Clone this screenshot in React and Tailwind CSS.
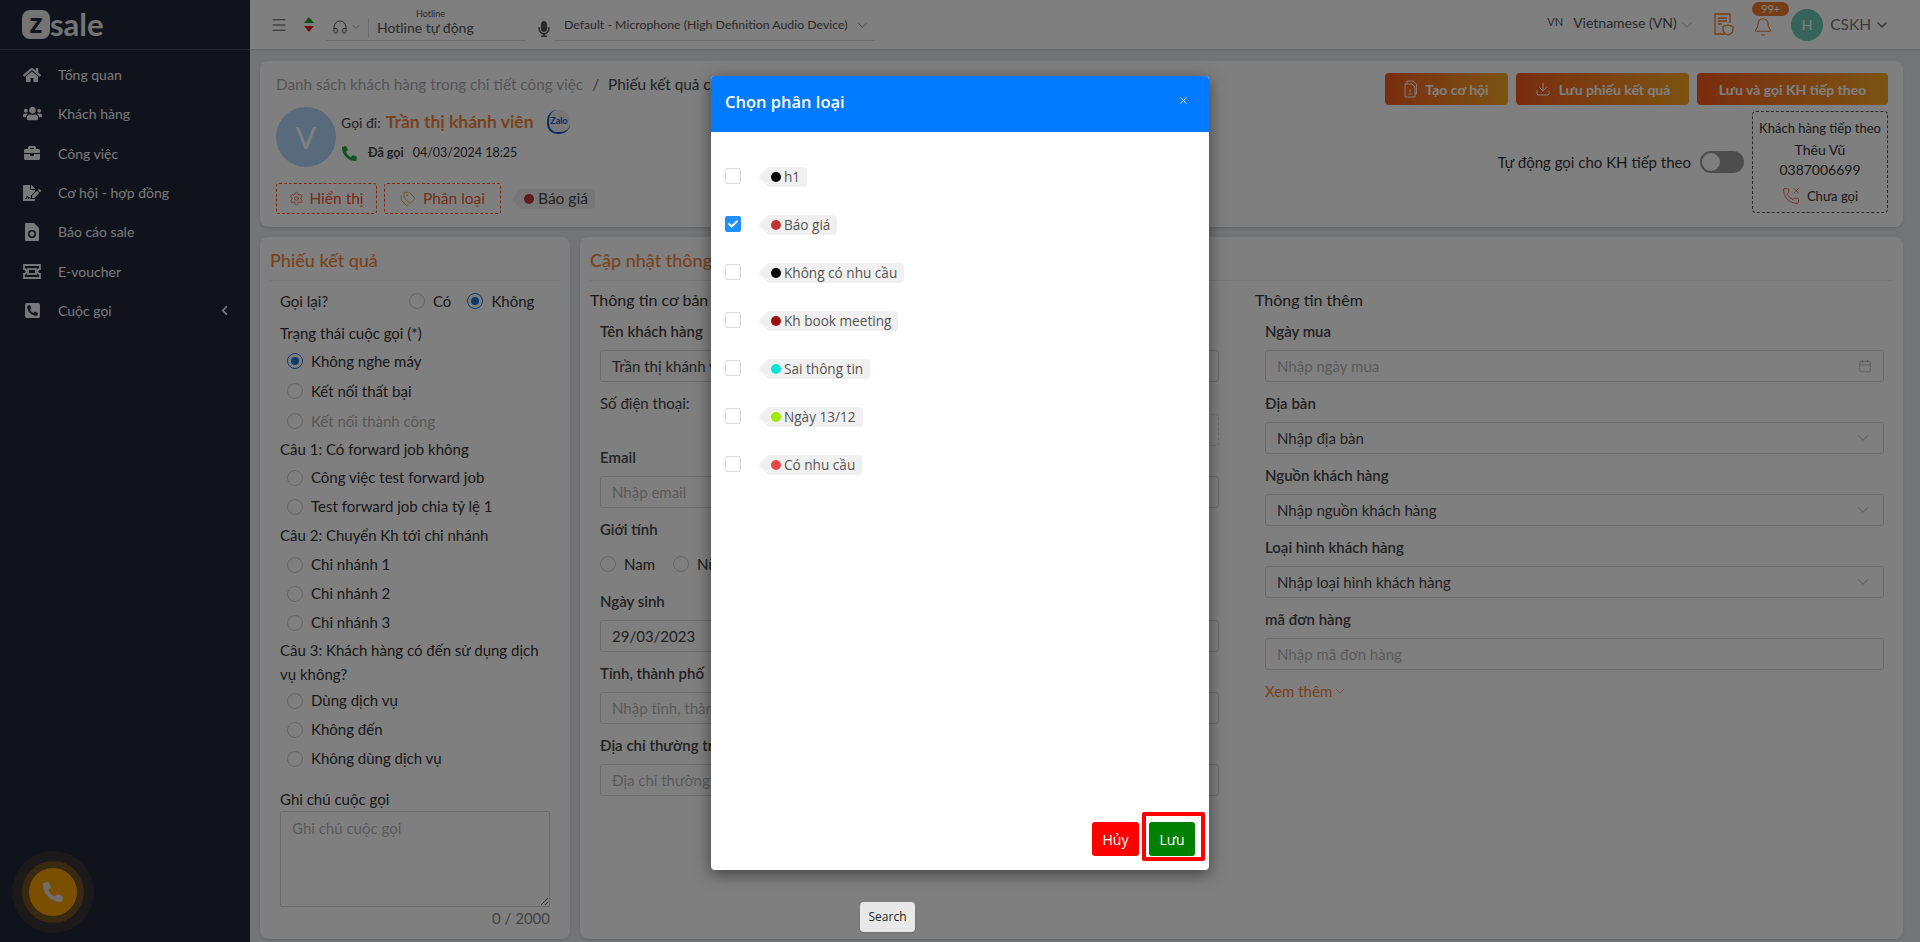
import { FaHome, FaUsers, FaBriefcase, FaFileSignature, FaPhoneSquareAlt, FaChevronLeft, FaMicrophone, FaPhoneAlt, FaCheck } from "react-icons/fa";
import { Bell, Calendar, ChevronDown, Download, Headphones, Menu, PhoneMissed, Settings, Tags, X } from "lucide-react";

const main = { fontFamily: "Lato, 'Noto Sans', sans-serif" };
const modalFont = { fontFamily: "'Open Sans', 'Noto Sans', sans-serif" };

const navItems = [
  { label: "Tổng quan", icon: <FaHome size={18} /> },
  { label: "Khách hàng", icon: <FaUsers size={19} /> },
  { label: "Công việc", icon: <FaBriefcase size={16} /> },
  { label: "Cơ hội - hợp đồng", icon: <FaFileSignature size={18} /> },
  {
    label: "Báo cáo sale",
    icon: (
      <svg width="14" height="18" viewBox="0 0 14 18">
        <path d="M1 0h8l5 5v12a1 1 0 0 1-1 1H1a1 1 0 0 1-1-1V1a1 1 0 0 1 1-1z" fill="currentColor" />
        <circle cx="7" cy="11" r="3.2" fill="none" stroke="#222638" strokeWidth="1.6" />
      </svg>
    ),
  },
  {
    label: "E-voucher",
    icon: (
      <svg width="18" height="15" viewBox="0 0 18 15" fill="none" stroke="currentColor" strokeWidth="1.8">
        <path d="M1 1h16v4a2.5 2.5 0 0 0 0 5v4H1v-4a2.5 2.5 0 0 0 0-5z" />
        <rect x="5" y="5" width="8" height="5" />
      </svg>
    ),
  },
  { label: "Cuộc gọi", icon: <FaPhoneSquareAlt size={17} />, arrow: true },
];

const tags = [
  { label: "h1", color: "bg-black" },
  { label: "Báo giá", color: "bg-[#c23535]", checked: true },
  { label: "Không có nhu cầu", color: "bg-black" },
  { label: "Kh book meeting", color: "bg-[#9b0f0f]" },
  { label: "Sai thông tin", color: "bg-[#0de3d8]" },
  { label: "Ngày 13/12", color: "bg-[#a2e800]" },
  { label: "Có nhu cầu", color: "bg-[#e54848]" },
];

function Circle({ checked }) {
  return (
    <span className={`w-[16px] h-[16px] rounded-full border bg-white flex items-center justify-center shrink-0 ${checked ? "border-[#1976d2]" : "border-[#ccc]"}`}>
      {checked && <span className="w-[8px] h-[8px] rounded-full bg-[#1976d2]"></span>}
    </span>
  );
}

function Radio({ label, checked, disabled, height = "h-[29px]" }) {
  return (
    <div className={`flex items-center pl-[7px] ${height} ${disabled ? "text-[#b0b0b0]" : "text-[#333]"}`}>
      <Circle checked={checked} />
      <span className="ml-[8px]">{label}</span>
    </div>
  );
}

function Field({ label, placeholder, value, icon }) {
  return (
    <div className="h-[72px] pl-[10px]">
      <div className="h-[20px] leading-[20px] font-semibold text-[#444]">{label}</div>
      <div className="mt-[9px] h-[32px] border border-[#d9d9d9] rounded-[3px] bg-white flex items-center justify-between px-[11px]">
        <span className={`whitespace-nowrap ${value ? "text-[#444]" : "text-[#b5b5b5]"}`}>{value || placeholder}</span>
        {icon}
      </div>
    </div>
  );
}

function ActionButton({ icon, children, width }) {
  return (
    <button className={`h-[32px] rounded-[4px] bg-gradient-to-r from-[#f2591f] to-[#f7a624] text-white font-bold flex items-center justify-center gap-[8px] ${width}`}>
      {icon}
      {children}
    </button>
  );
}

export default function App() {
  const chevron = <ChevronDown size={18} strokeWidth={1} className="text-[#999]" />;

  return (
    <div style={main} className="relative w-full h-[942px] overflow-hidden flex bg-[#e6e8f0] text-[14px] text-[#333]">
      <aside className="w-[250px] shrink-0 bg-[#222638] text-[#f0f0f5] flex flex-col">
        <div className="h-[50px] shrink-0 border-b border-[#4a4d5e] flex items-center pl-[22px]">
          <span className="w-[28px] h-[29px] rounded-[8px] bg-[#e8e8e8] text-[#222638] font-black text-[28px] leading-[24px] text-center">z</span>
          <span className="text-[31px] leading-none font-bold text-[#e8e8e8]">sale</span>
        </div>
        <nav className="pt-[5px]">
          {navItems.map((item) => (
            <div key={item.label} className="h-[39.3px] flex items-center pl-[22px] pr-[20px]">
              <span className="w-[20px] flex justify-center">{item.icon}</span>
              <span className="ml-[16px] flex-1">{item.label}</span>
              {item.arrow && <FaChevronLeft size={11} />}
            </div>
          ))}
        </nav>
      </aside>

      <div className="absolute left-[29px] top-[868px] w-[48px] h-[48px] rounded-full bg-[#f59e00] text-[#ddd] flex items-center justify-center shadow-[0_0_0_7px_rgba(245,158,0,0.3),0_0_0_17px_rgba(245,158,0,0.1)]">
        <FaPhoneAlt size={20} />
      </div>

      <div className="flex-1 flex flex-col min-w-0">
        <header className="h-[49px] shrink-0 bg-white shadow-sm flex items-center text-[#555]">
          <Menu size={18} strokeWidth={1.5} className="ml-[20px]" />
          <span className="ml-[16px] flex flex-col items-center gap-[3px]">
            <span className="w-0 h-0 border-x-[5px] border-x-transparent border-b-[6px] border-b-[#1c9a1c]"></span>
            <span className="w-0 h-0 border-x-[5px] border-x-transparent border-t-[6px] border-t-[#e02020]"></span>
          </span>
          <div className="ml-[12px] self-start w-[200px] h-[41px] border-b border-[#ddd] flex items-end pb-[1px] relative">
            <Headphones size={16} strokeWidth={1.5} className="ml-[6px] mb-[4px]" />
            <ChevronDown size={12} strokeWidth={1} className="ml-[2px] mb-[6px]" />
            <span className="ml-[6px] pl-[8px] border-l border-[#ddd] text-[14px] leading-[20px] mb-[1px]">Hotline tự động</span>
            <span className="absolute left-[90px] top-[8px] text-[9px] leading-[12px]">Hotline</span>
          </div>
          <FaMicrophone size={16} className="ml-[10px] mt-[8px]" />
          <div className="ml-[3px] self-start w-[320px] h-[41px] border-b border-[#ddd] flex items-start pl-[9px] pt-[16px] gap-[8px] text-[12.3px] leading-[18px] whitespace-nowrap">
            <span>Default - Microphone (High Definition Audio Device)</span>
            <ChevronDown size={15} strokeWidth={1} className="mt-[2px]" />
          </div>
          <div className="ml-auto flex items-center whitespace-nowrap">
            <span className="text-[11px] mr-[10px] mb-[4px]">VN</span>
            <span className="w-[105px] mb-[4px]">Vietnamese (VN)</span>
            {chevron}
            <svg width="20" height="23" viewBox="0 0 20 23" fill="none" stroke="#ef7a2e" strokeWidth="1.3" className="ml-[18px]">
              <path d="M11 21H1V1h15v9" />
              <path d="M4 5h9M4 8h9M4 11h4" />
              <path d="M14 12l5 1.5v3.5c0 2.500-2 4-5 5-3-1-5-2.500-5-5v-3.500z" />
            </svg>
            <span className="relative ml-[19px]">
              <Bell size={20} strokeWidth={1.3} className="text-[#ef7a2e] mt-[4px]" />
              <span className="absolute left-[-1px] top-[-11px] w-[37px] h-[14px] rounded-full bg-[#ef7a2e] text-white text-[11px] leading-[14px] text-center">99+</span>
            </span>
            <span className="ml-[18px] w-[32px] h-[32px] rounded-full bg-[#6fc8b4] text-white text-[14px] flex items-center justify-center">H</span>
            <span className="ml-[7px] text-[15.5px] text-[#777]">CSKH</span>
            <ChevronDown size={16} strokeWidth={2.5} className="ml-[3px] mr-[30px] text-[#777]" />
          </div>
        </header>

        <main className="flex-1 pt-[12px] pl-[10px] pr-[17px] flex flex-col gap-[10px] min-h-0">
          <section className="h-[166px] shrink-0 bg-white rounded-[8px] shadow-sm flex justify-between pl-[16px] pr-[15px]">
            <div>
              <div className="mt-[13px] h-[20px] leading-[20px] text-[15.3px]">
                <span className="text-[#aaa]">Danh sách khách hàng trong chi tiết công việc</span>
                <span className="text-[#777] mx-[9px]">/</span>
                <span className="text-[#444]">Phiếu kết quả cuộc gọi</span>
              </div>
              <div className="mt-[13px] flex">
                <div className="w-[60px] h-[60px] rounded-full bg-[#b3d4fb] text-white text-[30px] flex items-center justify-center">V</div>
                <div className="ml-[5px]">
                  <div className="mt-[5px] h-[20px] flex items-center">
                    <span className="text-[#444]">Gọi đi:</span>
                    <span className="ml-[5px] text-[17.500px] font-bold text-[#f0843c]">Trần thị khánh viên</span>
                    <span className="ml-[13px] w-[23px] h-[24px] rounded-[10px] border-l-2 border-b-2 border-[#1a56c4] bg-[#eee] text-[#1a56c4] text-[9px] font-bold flex items-center justify-center">Zalo</span>
                  </div>
                  <div className="mt-[11px] h-[20px] flex items-center text-[12.5px]">
                    <FaPhoneAlt size={15} className="text-[#28a745] ml-[1px]" />
                    <span className="ml-[11px] font-bold text-[#444]">Đã gọi</span>
                    <span className="ml-[9px]">04/03/2024 18:25</span>
                  </div>
                </div>
              </div>
              <div className="mt-[16px] flex items-center text-[#ef5a2c]">
                <button className="w-[101px] h-[31px] border border-dashed border-[#ef5a2c] rounded-[3px] flex items-center justify-center gap-[5px]">
                  <Settings size={15} strokeWidth={1.3} />
                  <span className="text-[15.5px]">Hiển thị</span>
                </button>
                <button className="ml-[7px] w-[117px] h-[31px] border border-dashed border-[#ef5a2c] rounded-[3px] flex items-center justify-center gap-[7px]">
                  <Tags size={16} strokeWidth={1.3} className="text-[#e8a33a]" />
                  <span className="text-[15.5px]">Phân loại</span>
                </button>
                <span className="ml-[11px] w-0 h-0 border-y-[10px] border-y-transparent border-r-[8px] border-r-[#eee]"></span>
                <span className="h-[20px] w-[75px] pl-[4px] bg-[#eee] rounded-r-[4px] flex items-center gap-[4px] text-[#444] text-[15.5px]">
                  <span className="w-[10px] h-[10px] rounded-full bg-[#c23535]"></span>
                  Báo giá
                </span>
              </div>
            </div>
            <div className="pt-[12px]">
              <div className="flex justify-end gap-[8px]">
                <ActionButton
                  width="w-[123px]"
                  icon={
                    <svg width="13" height="18" viewBox="0 0 13 18" fill="none" stroke="currentColor" strokeWidth="1">
                      <path d="M1 4h7l3 3v10H1z" />
                      <path d="M3 4V1h6l3.500 3v10H11" />
                      <path d="M6 9v3M4.500 14h3" />
                    </svg>
                  }
                >
                  Tạo cơ hội
                </ActionButton>
                <ActionButton width="w-[173px]" icon={<Download size={16} strokeWidth={1.5} />}>Lưu phiếu kết quả</ActionButton>
                <ActionButton width="w-[191px]">Lưu và gọi KH tiếp theo</ActionButton>
              </div>
              <div className="mt-[6px] flex justify-end items-center">
                <span className="text-[15px]">Tự động gọi cho KH tiếp theo</span>
                <span className="ml-[9px] w-[44px] h-[22px] rounded-full bg-[#9a9a9a] relative">
                  <span className="absolute left-[2px] top-[2px] w-[18px] h-[18px] rounded-full bg-white"></span>
                </span>
                <div className="ml-[8px] w-[136px] h-[102px] border border-dashed border-[#555] rounded-[4px] flex flex-col items-center text-[13px] leading-[18px]">
                  <span className="mt-[7px]">Khách hàng tiếp theo</span>
                  <span className="mt-[3px] text-[14px] leading-[20px]">Thêu Vũ</span>
                  <span className="text-[14px] leading-[20px]">0387006699</span>
                  <span className="mt-[7px] flex items-center gap-[7px]">
                    <PhoneMissed size={18} strokeWidth={1} className="text-[#e0393e]" />
                    Chưa gọi
                  </span>
                </div>
              </div>
            </div>
          </section>

          <div className="flex-1 flex gap-[10px] min-h-0 mb-[3px] text-[15px]">
            <section className="w-[310px] shrink-0 bg-white rounded-[8px] shadow-sm px-[10px]">
              <h2 className="h-[44px] leading-[46px] border-b border-[#eee] text-[18px] font-medium text-[#f0843c]">Phiếu kết quả</h2>
              <div className="px-[10px]">
                <div className="mt-[6px] h-[28px] flex items-center">
                  <span className="w-[129px]">Gọi lại?</span>
                  <Circle />
                  <span className="ml-[8px]">Có</span>
                  <span className="ml-[16px]"><Circle checked /></span>
                  <span className="ml-[8px]">Không</span>
                </div>
                <div className="mt-[4px] h-[28px] leading-[28px]">Trạng thái cuộc gọi (*)</div>
                <div className="mt-[-1px]">
                  <Radio label="Không nghe máy" checked height="h-[30px]" />
                  <Radio label="Kết nối thất bại" height="h-[30px]" />
                  <Radio label="Kết nối thành công" disabled height="h-[30px]" />
                </div>
                <div className="h-[26px] leading-[26px]">Câu 1: Có forward job không</div>
                <div className="mt-[1px]">
                  <Radio label="Công việc test forward job" />
                  <Radio label="Test forward job chia tỷ lệ 1" />
                </div>
                <div className="mt-[1px] h-[26px] leading-[26px]">Câu 2: Chuyển Kh tới chi nhánh</div>
                <div className="mt-[2px]">
                  <Radio label="Chi nhánh 1" />
                  <Radio label="Chi nhánh 2" />
                  <Radio label="Chi nhánh 3" />
                </div>
                <div className="mt-[1px] leading-[24px]">Câu 3: Khách hàng có đến sử dụng dịch vụ không?</div>
                <div>
                  <Radio label="Dùng dịch vụ" />
                  <Radio label="Không đến" />
                  <Radio label="Không dùng dịch vụ" />
                </div>
                <div className="mt-[16px] h-[20px] leading-[20px]">Ghi chú cuộc gọi</div>
                <textarea placeholder="Ghi chú cuộc gọi" className="mt-[2px] block w-full h-[96px] border border-[#d9d9d9] rounded-[2px] px-[11px] py-[5px] placeholder:text-[#b5b5b5]"></textarea>
                <div className="text-right text-[#888]">0 / 2000</div>
              </div>
            </section>

            <section className="flex-1 bg-white rounded-[8px] shadow-sm px-[10px]">
              <h2 className="h-[44px] leading-[46px] border-b border-[#eee] text-[18px] font-medium text-[#f0843c]">Cập nhật thông tin</h2>
              <div className="grid grid-cols-2 gap-x-[36px] pr-[9px] pt-[9px]">
                <div>
                  <div className="h-[20px] leading-[20px] text-[16px] mb-[11px]">Thông tin cơ bản</div>
                  <Field label="Tên khách hàng" value="Trần thị khánh viên" />
                  <div className="h-[54px] pl-[10px]">
                    <div className="h-[20px] leading-[20px] text-[#444]">Số điện thoại:</div>
                    <div className="mt-[1px] ml-auto w-[200px] h-[32px] border border-dashed border-[#ddd] rounded-[3px]"></div>
                  </div>
                  <Field label="Email" placeholder="Nhập email" />
                  <div className="h-[72px] pl-[10px]">
                    <div className="h-[20px] leading-[20px] font-semibold text-[#444]">Giới tính</div>
                    <div className="mt-[14px] flex items-center">
                      <Circle />
                      <span className="ml-[8px]">Nam</span>
                      <span className="ml-[18px]"><Circle /></span>
                      <span className="ml-[8px]">Nữ</span>
                    </div>
                  </div>
                  <Field label="Ngày sinh" value="29/03/2023" />
                  <Field label="Tỉnh, thành phố" placeholder="Nhập tỉnh, thành phố" />
                  <Field label="Địa chỉ thường trú" placeholder="Địa chỉ thường trú" />
                </div>
                <div>
                  <div className="h-[20px] leading-[20px] text-[16px] mb-[11px]">Thông tin thêm</div>
                  <Field label="Ngày mua" placeholder="Nhập ngày mua" icon={<Calendar size={14} strokeWidth={1} className="text-[#999]" />} />
                  <Field label="Địa bàn" value="Nhập địa bàn" icon={chevron} />
                  <Field label="Nguồn khách hàng" value="Nhập nguồn khách hàng" icon={chevron} />
                  <Field label="Loại hình khách hàng" value="Nhập loại hình khách hàng" icon={chevron} />
                  <Field label="mã đơn hàng" placeholder="Nhập mã đơn hàng" />
                  <div className="pl-[10px] h-[20px] flex items-center text-[#f0843c]">
                    Xem thêm
                    <ChevronDown size={16} strokeWidth={1} />
                  </div>
                </div>
              </div>
            </section>
          </div>
        </main>
      </div>

      {/* modal overlay */}
      <div className="absolute inset-0 bg-black/50"></div>

      <div style={modalFont} className="absolute left-[711px] top-[76px] w-[498px] h-[794px] bg-white rounded-[4px] shadow-[0_4px_16px_rgba(0,0,0,0.5)] flex flex-col overflow-hidden">
        <div className="h-[56px] shrink-0 bg-[#007bff] flex items-center justify-between pl-[14px] pr-[20px] text-white">
          <h3 className="text-[16.5px] font-semibold mb-[3px]">Chọn phân loại</h3>
          <X size={11} className="mb-[8px]" />
        </div>
        <div className="flex-1 pl-[14px] pt-[24px]">
          {tags.map((tag) => (
            <div key={tag.label} className="h-[48px] flex items-start">
              <span className={`mt-[12px] w-[16px] h-[16px] rounded-[2px] flex items-center justify-center ${tag.checked ? "bg-[#1e90ff]" : "border border-[#d9d9d9]"}`}>
                {tag.checked && <FaCheck size={10} className="text-white" />}
              </span>
              <span className="mt-[11px] ml-[18px] w-0 h-0 border-y-[10px] border-y-transparent border-r-[9px] border-r-[#f0f0f0]"></span>
              <span className="mt-[11px] h-[20px] pl-[3px] pr-[7px] bg-[#f0f0f0] rounded-r-[4px] flex items-center gap-[3px] text-[13.6px] leading-none text-[#555]">
                <span className={`w-[10px] h-[10px] rounded-full ${tag.color}`}></span>
                {tag.label}
              </span>
            </div>
          ))}
        </div>
        <div className="h-[48px] shrink-0 flex justify-end gap-[10px] pr-[14px]">
          <button className="w-[47px] h-[34px] rounded-[3px] bg-[#ff0000] text-white text-[14px]">Hủy</button>
          <div className="relative">
            <button className="w-[46px] h-[34px] rounded-[3px] bg-[#008000] text-white text-[14px]">Lưu</button>
            <span className="absolute left-[-7px] top-[-10px] w-[63px] h-[49px] border-[4px] border-[#ff0000] rounded-[2px]"></span>
          </div>
        </div>
      </div>

      <button style={modalFont} className="absolute left-[860px] top-[902px] w-[55px] h-[30px] rounded-[4px] bg-[#e8e8e8] text-[#222] text-[12px] shadow">Search</button>
    </div>
  );
}
